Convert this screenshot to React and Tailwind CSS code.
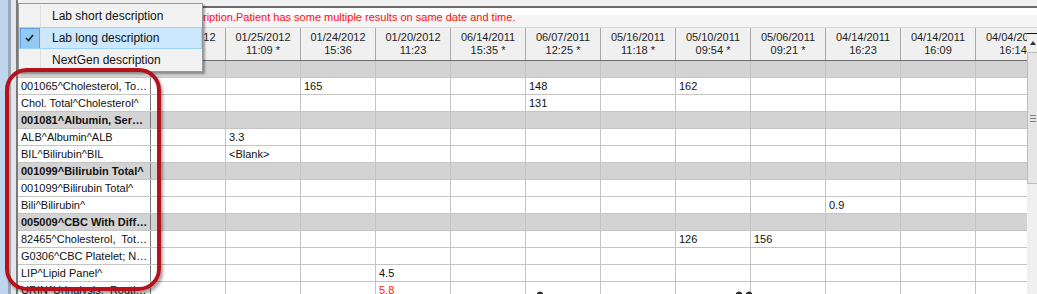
import React from 'react';

const columns = [
  ['01/30/2012', '10:02'],
  ['01/25/2012', '11:09 *'],
  ['01/24/2012', '15:36'],
  ['01/20/2012', '11:23'],
  ['06/14/2011', '15:35 *'],
  ['06/07/2011', '12:25 *'],
  ['05/16/2011', '11:18 *'],
  ['05/10/2011', '09:54 *'],
  ['05/06/2011', '09:21 *'],
  ['04/14/2011', '16:23'],
  ['04/14/2011', '16:09'],
  ['04/04/2011', '16:14'],
];

const rows = [
  { label: '', group: true },
  { label: '001065^Cholesterol, Total^', vals: { 2: '165', 5: '148', 7: '162' } },
  { label: 'Chol. Total^Cholesterol^', vals: { 5: '131' } },
  { label: '001081^Albumin, Serum^', group: true },
  { label: 'ALB^Albumin^ALB', vals: { 1: '3.3' } },
  { label: 'BIL^Bilirubin^BIL', vals: { 1: '<Blank>' } },
  { label: '001099^Bilirubin Total^', group: true },
  { label: '001099^Bilirubin Total^' },
  { label: 'Bili^Bilirubin^', vals: { 9: '0.9' } },
  { label: '005009^CBC With Differential^', group: true },
  { label: '82465^Cholesterol,  Total^', vals: { 7: '126', 8: '156' } },
  { label: 'G0306^CBC Platelet; No Diff^' },
  { label: 'LIP^Lipid Panel^', vals: { 3: '4.5' } },
  { label: 'URIN^Urinalysis,  Routine^', vals: { 3: '5.8' }, red: true, marks: true },
];

const Mark = () => (
  <svg width="8" height="6" viewBox="0 0 8 6" className="mt-[8px]">
    <path d="M1 6 L1 3 Q4 0 7 3 L7 6 Z" fill="#2a2a2a" />
  </svg>
);

const MenuItem = ({ label, checked }) => (
  <div
    className={`h-[22px] flex items-center ${
      checked ? 'bg-[#cce8ff] outline outline-1 -outline-offset-1 outline-[#99d1ff]' : ''
    }`}
  >
    <div className="w-[21px] h-full flex items-center justify-center">
      {checked && (
        <div className="w-[20px] h-[21px] bg-[#90c8f6] border border-[#62a2e4] flex items-center justify-center">
          <svg width="9" height="8" viewBox="0 0 9 8">
            <path d="M1 4 L3.5 6.5 L8 1" stroke="#1b1b1b" strokeWidth="1.6" fill="none" />
          </svg>
        </div>
      )}
    </div>
    <div className="w-[1px] h-full bg-[#e0e0e0]" />
    <span className="pl-[11px] text-[12px] text-[#111] whitespace-nowrap">{label}</span>
  </div>
);

export default function App() {
  return (
    <div className="w-[1037px] h-[294px] overflow-hidden relative flex bg-[#f0f0f0] font-['Liberation_Sans',Arial,sans-serif] text-[11px] text-[#111]">
      {/* window frame on the left */}
      <div className="w-[18px] shrink-0 flex">
        <div className="w-[8px] bg-[#c0d5ee]" />
        <div className="w-[3px] bg-[#9aa7b5]" />
        <div className="w-[5px] bg-[#e3e6ea]" />
        <div className="w-[2px] bg-[#7a7a7a]" />
      </div>

      <div className="flex-1 min-w-0 flex flex-col">
        <div className="h-[6px] bg-[#f0f0f0] shrink-0" />
        <div className="h-[2px] bg-[#6b6b6b] shrink-0" />
        <div className="h-[19px] shrink-0 bg-[linear-gradient(to_bottom,#ffffff_0,#ffffff_7px,#f5f5f5_7px)] pl-[185px] leading-[19px] text-[#ff1010] whitespace-nowrap">
          ription.Patient has some multiple results on same date and time.
        </div>

        <div className="flex-1 min-h-0 flex">
          {/* grid */}
          <div className="w-[1009px] overflow-hidden flex flex-col">
            <div className="h-[34px] shrink-0 flex border-t border-[#d8d8d8] border-b border-b-[#6e6e6e] bg-[#f0f0f0]">
              <div className="w-[133px] shrink-0 border-r border-[#7a7a7a]" />
              {columns.map(([d, t], i) => (
                <div
                  key={i}
                  className="w-[75px] shrink-0 border-r border-[#a8a8a8] flex flex-col items-center justify-center leading-[13px] text-[#1e1e1e]"
                >
                  <span className="whitespace-nowrap">{d}</span>
                  <span className="whitespace-nowrap">{t}</span>
                </div>
              ))}
            </div>

            {rows.map((r, ri) => (
              <div
                key={ri}
                className={`h-[17px] shrink-0 flex border-b border-[#c4c4c4] leading-[16px] ${
                  r.group ? 'bg-[#d3d3d3]' : 'bg-white'
                }`}
              >
                <div
                  className={`w-[133px] shrink-0 border-r border-[#7a7a7a] pl-[3px] pr-[2px] overflow-hidden text-ellipsis whitespace-pre ${
                    r.group ? 'font-bold' : ''
                  }`}
                >
                  {r.label}
                </div>
                {columns.map((_, ci) => (
                  <div
                    key={ci}
                    className={`w-[75px] shrink-0 border-r border-[#c4c4c4] pl-[3px] flex whitespace-nowrap ${
                      r.red ? 'text-[#ff1a1a]' : 'text-[#111]'
                    }`}
                  >
                    {r.vals && r.vals[ci]}
                    {r.marks && ci === 5 && (
                      <span className="pl-[7px]">
                        <Mark />
                      </span>
                    )}
                    {r.marks && ci === 7 && (
                      <span className="pl-[56px] flex gap-[2px]">
                        <Mark />
                        <Mark />
                      </span>
                    )}
                  </div>
                ))}
              </div>
            ))}
          </div>

          {/* vertical scrollbar (cut at the window edge) */}
          <div className="w-[10px] shrink-0 flex flex-col">
            <div className="h-[6px] bg-[#f0f0f0] border-t border-[#d8d8d8]" />
            <div className="h-[1px] bg-[#111]" />
            <div className="h-[18px] bg-[#f0f0f0] flex items-center justify-end pr-[1px]">
              <svg width="6" height="4" viewBox="0 0 6 4">
                <path d="M0 4 L3 0 L6 4 Z" fill="#333" />
              </svg>
            </div>
            <div className="h-[132px] bg-[#e6e6e6] border-l border-t border-b border-[#bdbdbd] flex flex-col items-end justify-center gap-[2px] pr-[1px]">
              <div className="w-[6px] h-[1px] bg-[#7d7d7d]" />
              <div className="w-[6px] h-[1px] bg-[#7d7d7d]" />
              <div className="w-[6px] h-[1px] bg-[#7d7d7d]" />
            </div>
            <div className="flex-1 bg-[#f0f0f0]" />
          </div>
        </div>
      </div>

      {/* context menu */}
      <div className="absolute left-[18px] top-[3px] w-[185px] h-[69px] bg-[#f2f2f2] border border-[#979797] shadow-[2px_2px_2px_rgba(0,0,0,0.35)] pt-[1px]">
        <MenuItem label="Lab short description" />
        <MenuItem label="Lab long description" checked />
        <MenuItem label="NextGen description" />
      </div>

      {/* red annotation */}
      <div className="absolute left-[5px] top-[68px] w-[156px] h-[223px] border-[4px] border-[#b5121b] rounded-[22px] shadow-[2px_3px_3px_rgba(0,0,0,0.35)] pointer-events-none" />
    </div>
  );
}
